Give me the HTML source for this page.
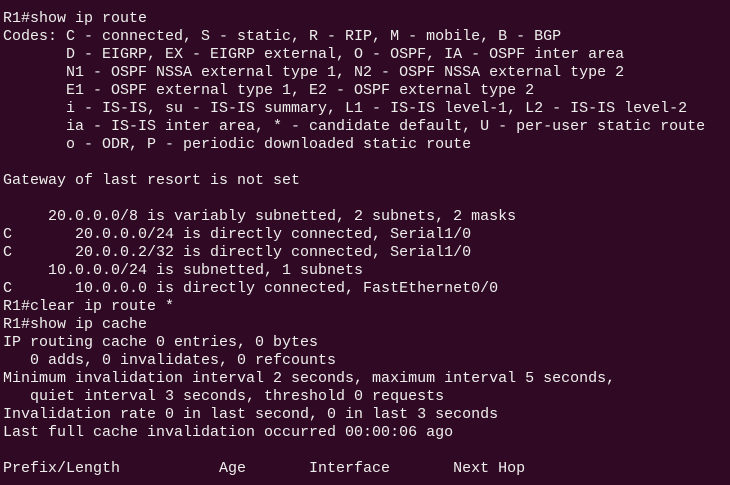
<!DOCTYPE html>
<html><head><meta charset="utf-8"><style>
html,body{margin:0;padding:0;background:#300a24;width:730px;height:485px;overflow:hidden}
pre{margin:0;padding:10px 0 0 3px;font-family:"Liberation Mono",monospace;font-size:15px;line-height:18px;color:#eeeeec;white-space:pre}
</style></head><body><pre>R1#show ip route
Codes: C - connected, S - static, R - RIP, M - mobile, B - BGP
       D - EIGRP, EX - EIGRP external, O - OSPF, IA - OSPF inter area
       N1 - OSPF NSSA external type 1, N2 - OSPF NSSA external type 2
       E1 - OSPF external type 1, E2 - OSPF external type 2
       i - IS-IS, su - IS-IS summary, L1 - IS-IS level-1, L2 - IS-IS level-2
       ia - IS-IS inter area, * - candidate default, U - per-user static route
       o - ODR, P - periodic downloaded static route

Gateway of last resort is not set

     20.0.0.0/8 is variably subnetted, 2 subnets, 2 masks
C       20.0.0.0/24 is directly connected, Serial1/0
C       20.0.0.2/32 is directly connected, Serial1/0
     10.0.0.0/24 is subnetted, 1 subnets
C       10.0.0.0 is directly connected, FastEthernet0/0
R1#clear ip route *
R1#show ip cache
IP routing cache 0 entries, 0 bytes
   0 adds, 0 invalidates, 0 refcounts
Minimum invalidation interval 2 seconds, maximum interval 5 seconds,
   quiet interval 3 seconds, threshold 0 requests
Invalidation rate 0 in last second, 0 in last 3 seconds
Last full cache invalidation occurred 00:00:06 ago

Prefix/Length           Age       Interface       Next Hop
</pre></body></html>
